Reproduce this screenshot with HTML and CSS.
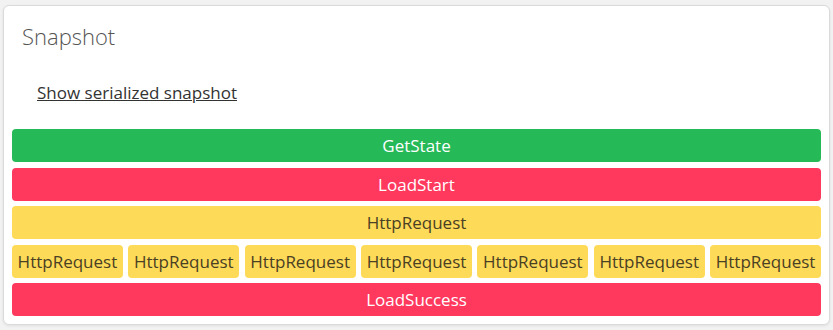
FILE: index.html
```html
<!DOCTYPE html>
<html lang="en">
<head>
  <meta charset="UTF-8">
  <meta name="viewport" content="width=device-width, initial-scale=1.0">
  <title>Snapshot</title>
  <link rel="stylesheet" href="styles.css">
</head>
<body>
<div class="card">
  <h2 class="card-title">Snapshot</h2>

  <div class="serialized">
    <a href="#" class="serialized-link">Show serialized snapshot</a>
  </div>

  <div class="timeline">
    <div class="step step-green">GetState</div>
    <div class="step step-red">LoadStart</div>
    <div class="step step-yellow">HttpRequest</div>
    <div class="step-row">
      <div class="step step-yellow">HttpRequest</div>
      <div class="step step-yellow">HttpRequest</div>
      <div class="step step-yellow">HttpRequest</div>
      <div class="step step-yellow">HttpRequest</div>
      <div class="step step-yellow">HttpRequest</div>
      <div class="step step-yellow">HttpRequest</div>
      <div class="step step-yellow">HttpRequest</div>
    </div>
    <div class="step step-red">LoadSuccess</div>
  </div>
</div>
</body>
</html>
```

FILE: styles.css
```css
body {
  margin: 0;
  padding: 5px 3px;
  background-color: #F2F2F2;
  font-family: "Open Sans", "Noto Sans", sans-serif;
  font-size: 17px;
  color: #333333;
}
.card {
  background-color: #FFFFFF;
  border: 1px solid #DADADA;
  border-radius: 6px;
  box-shadow: 0 1px 3px rgba(0, 0, 0, 0.08);
  padding: 8px;
  height: 320px;
  box-sizing: border-box;
}
.card-title {
  margin: 0;
  padding: 7px 10px 0;
  font-size: 22px;
  font-weight: 300;
  line-height: 30px;
  color: #555555;
}
.serialized {
  padding: 30px 25px 24px;
  line-height: 24px;
}
.serialized-link {
  color: #333333;
  text-decoration: underline;
  font-size: 17px;
}
.timeline {
  display: flex;
  flex-direction: column;
  gap: 5.5px;
}
.step-row {
  display: flex;
  gap: 5.5px;
}
.step-row .step {
  flex: 1;
}
.step {
  height: 33px;
  line-height: 33px;
  text-align: center;
  border-radius: 4px;
  font-size: 17px;
  white-space: nowrap;
}
.step-green {
  background-color: #26B957;
  color: #FFFFFF;
}
.step-red {
  background-color: #FF385E;
  color: #FFFFFF;
}
.step-yellow {
  background-color: #FDDA57;
  color: #4A4024;
}
```
